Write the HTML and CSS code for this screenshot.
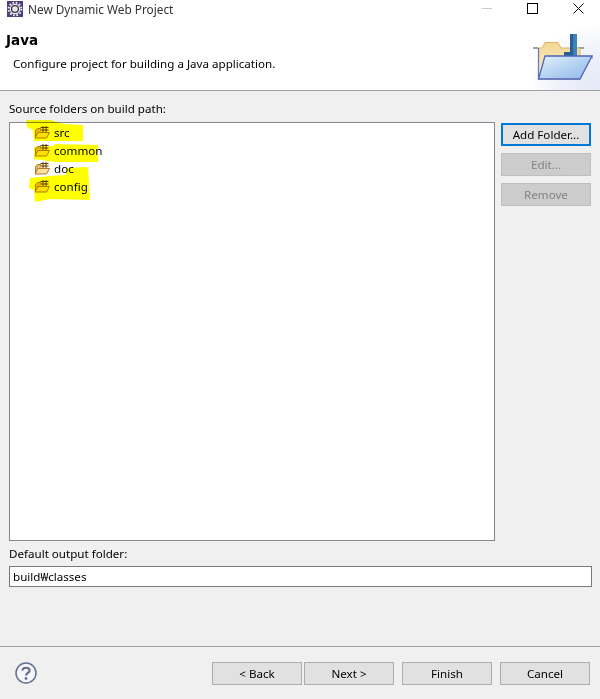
FILE: index.html
```html
<!DOCTYPE html>
<html lang="en">
<head>
<meta charset="utf-8">
<title>New Dynamic Web Project</title>
<link rel="stylesheet" href="styles.css">
</head>
<body>
<svg class="defs" width="0" height="0" aria-hidden="true">
  <defs>
    <symbol id="pkg" viewBox="0 0 16 16">
      <path d="M1.5 13.5V6.5L3.5 4.5H8V13.5Z" fill="#eab766" stroke="#b07a28"/>
      <path d="M7 3.5H14.5V8.5H7Z" fill="#fff3cf"/>
      <path d="M9 2V8.5M12 2V8.5M6.5 3.5H14.5M6.5 6H14.5" fill="none" stroke="#5f3d10" stroke-width="1"/>
      <path d="M1 14L4 8.5H15.5L12.5 14Z" fill="#fbe0a0" stroke="#b07a28"/>
    </symbol>
  </defs>
</svg>
<div class="window">
  <div class="titlebar">
    <svg class="app-icon" viewBox="0 0 16 16" width="16" height="16" aria-hidden="true">
      <rect width="16" height="16" fill="#4f3d7c"/>
      <circle cx="8" cy="8" r="6.4" fill="none" stroke="#f4f4f4" stroke-width="1.8" stroke-dasharray="1.7 1.65"/>
      <circle cx="8" cy="8" r="5.2" fill="#f4f4f4"/>
      <circle cx="8" cy="8" r="4.1" fill="#33333f"/>
      <circle cx="8" cy="8" r="2.8" fill="#e8e8ee"/>
    </svg>
    <span class="title-text">New Dynamic Web Project</span>
    <div class="win-controls">
      <span class="win-min"></span>
      <span class="win-max"></span>
      <svg class="win-close" viewBox="0 0 11 11" width="11" height="11" aria-hidden="true"><path d="M.5.5L10.5 10.5M10.5.5L.5 10.5" stroke="#000" fill="none"/></svg>
    </div>
  </div>
  <header class="banner">
    <div class="banner-text">
      <h1 class="banner-title">Java</h1>
      <p class="banner-desc">Configure project for building a Java application.</p>
    </div>
    <svg class="banner-icon" viewBox="0 0 60 48" width="60" height="48" aria-hidden="true">
      <defs>
        <linearGradient id="bk" x1="0" y1="0" x2="0" y2="1"><stop offset="0" stop-color="#f3d894"/><stop offset="1" stop-color="#fdf1cc"/></linearGradient>
        <linearGradient id="fr" x1="0" y1="0" x2="1" y2="1"><stop offset="0" stop-color="#e6f2fc"/><stop offset=".5" stop-color="#b5d3f2"/><stop offset="1" stop-color="#8fb8ea"/></linearGradient>
      </defs>
      <path d="M0 15H5M45 15H51M57 23L60 25" stroke="#a0a0a0" stroke-width="2" fill="none"/>
      <path d="M5.5 15H9L12 9.5H25L28 15H47V46H5.5Z" fill="url(#bk)" stroke="#d9b666"/>
      <path d="M5.5 15V46" stroke="#6577c4" stroke-width="1.3"/>
      <path d="M37 1H44V24H31V19H37Z" fill="#2a5f95"/>
      <path d="M40 1H44V24H40Z" fill="#3f82b8"/>
      <path d="M12 23H59L47 46H5.5Z" fill="url(#fr)" stroke="#4f63b8" stroke-width="1.3"/>
    </svg>
  </header>
  <main class="content">
    <label class="field-label">Source folders on build path:</label>
    <div class="list-row">
      <div class="list-box">
        <ul class="tree">
          <li class="tree-item"><svg class="folder" width="16" height="16"><use href="#pkg"/></svg>src</li>
          <li class="tree-item"><svg class="folder" width="16" height="16"><use href="#pkg"/></svg>common</li>
          <li class="tree-item"><svg class="folder" width="16" height="16"><use href="#pkg"/></svg>doc</li>
          <li class="tree-item"><svg class="folder" width="16" height="16"><use href="#pkg"/></svg>config</li>
        </ul>
        <svg class="marker" viewBox="10 117 100 90" width="100" height="90" aria-hidden="true">
          <path d="M26 120L50 120L64 124L83 125L83 141L34 141L33 130L27 127Z"/>
          <path d="M34 147L53 146L55 144L98 145L98 162L55 162L34 159Z"/>
          <path d="M66 168L88 167L90 200L50 199L35 202L34 190L29 188L30 178L50 176L66 175Z"/>
        </svg>
      </div>
      <div class="side-buttons">
        <button class="btn btn-default">Add Folder...</button>
        <button class="btn" disabled>Edit...</button>
        <button class="btn" disabled>Remove</button>
      </div>
    </div>
    <label class="field-label output-label">Default output folder:</label>
    <input class="text-input" type="text" value="build₩classes">
  </main>
  <footer class="footer">
    <svg class="help" viewBox="0 0 22 22" width="22" height="22" aria-hidden="true">
      <circle cx="11" cy="11" r="10" fill="#f6f7fa" stroke="#5f7191" stroke-width="1.5"/>
      <path d="M7.5 8.5C7.5 4.8 14.6 4.8 14.6 8.5C14.6 10.8 11 11 11 13.6" fill="none" stroke="#66718a" stroke-width="2.2"/>
      <circle cx="11" cy="16.5" r="1.4" fill="#66718a"/>
    </svg>
    <div class="nav-buttons">
      <div class="nav-pair">
        <button class="btn">&lt; Back</button>
        <button class="btn">Next &gt;</button>
      </div>
      <button class="btn">Finish</button>
      <button class="btn">Cancel</button>
    </div>
  </footer>
</div>
</body>
</html>
```
FILE: styles.css
```css
* { box-sizing: border-box; }
html, body { margin: 0; padding: 0; }
body {
  width: 600px;
  height: 699px;
  overflow: hidden;
  background: #f0f0f0;
  font-family: "Noto Sans", "Noto Sans CJK KR", sans-serif;
  font-size: 11.6px;
  color: #000;
}
.defs { position: absolute; }
.window { display: flex; flex-direction: column; height: 699px; }

.titlebar {
  display: flex;
  align-items: center;
  height: 17px;
  padding-left: 7px;
  background: #fff;
}
.app-icon { flex: none; }
.title-text { margin-left: 5px; color: #333; font-size: 11.8px; }
.win-controls {
  margin-left: auto;
  display: flex;
  align-items: center;
  padding-right: 16px;
}
.win-min { width: 10px; height: 1px; background: #ccc; }
.win-max { width: 11px; height: 11px; border: 1px solid #000; margin-left: 35px; }
.win-close { margin-left: 35px; }

.banner {
  display: flex;
  justify-content: space-between;
  height: 74px;
  padding: 14px 7px 0 6px;
  background:
    radial-gradient(ellipse 72px 66px at 100% 100%, #e3e8f7 0%, #eef1fa 55%, #fff 100%) no-repeat,
    #fff;
  border-bottom: 1px solid #a0a0a0;
}
.banner-title {
  margin: 0;
  font-family: "DejaVu Sans", sans-serif;
  font-size: 13.5px;
  font-weight: 700;
  line-height: 18px;
}
.banner-desc { margin: 7px 0 0 7px; line-height: 16px; }
.banner-icon { margin-top: 2px; flex: none; }

.content {
  flex: 1;
  display: flex;
  flex-direction: column;
  padding: 10px 8px 0 9px;
}
.field-label { line-height: 16px; height: 16px; }
.list-row { display: flex; margin-top: 5px; height: 419px; }
.list-box {
  position: relative;
  width: 486px;
  background: #fff;
  border: 1px solid #828790;
}
.tree { list-style: none; margin: 0; padding: 0 0 0 24px; }
.tree-item { display: flex; align-items: center; gap: 4px; height: 18px; }
.folder { flex: none; }
.marker {
  position: absolute;
  top: -6px;
  left: 0;
  overflow: visible;
  fill: #ffff00;
  mix-blend-mode: multiply;
}
.side-buttons {
  display: flex;
  flex-direction: column;
  gap: 7px;
  margin: 1px 0 0 6px;
}
.btn {
  width: 90px;
  height: 23px;
  padding: 0;
  background: #e1e1e1;
  border: 1px solid #adadad;
  font: inherit;
  color: #000;
}
.btn-default { border: 2px solid #0078d7; }
.btn:disabled { background: #cccccc; border-color: #bfbfbf; color: #838383; }
.output-label { margin-top: 5px; }
.text-input {
  width: 583px;
  height: 21px;
  margin-top: 4px;
  padding: 0 3px;
  background: #fff;
  border: 1px solid #7a7a7a;
  font: inherit;
  color: #000;
  outline: none;
}
.footer {
  display: flex;
  align-items: flex-start;
  height: 53px;
  padding: 15px 10px 0 15px;
  border-top: 1px solid #a0a0a0;
}
.nav-buttons { display: flex; gap: 8px; margin-left: auto; }
.nav-pair { display: flex; gap: 2px; }
```
